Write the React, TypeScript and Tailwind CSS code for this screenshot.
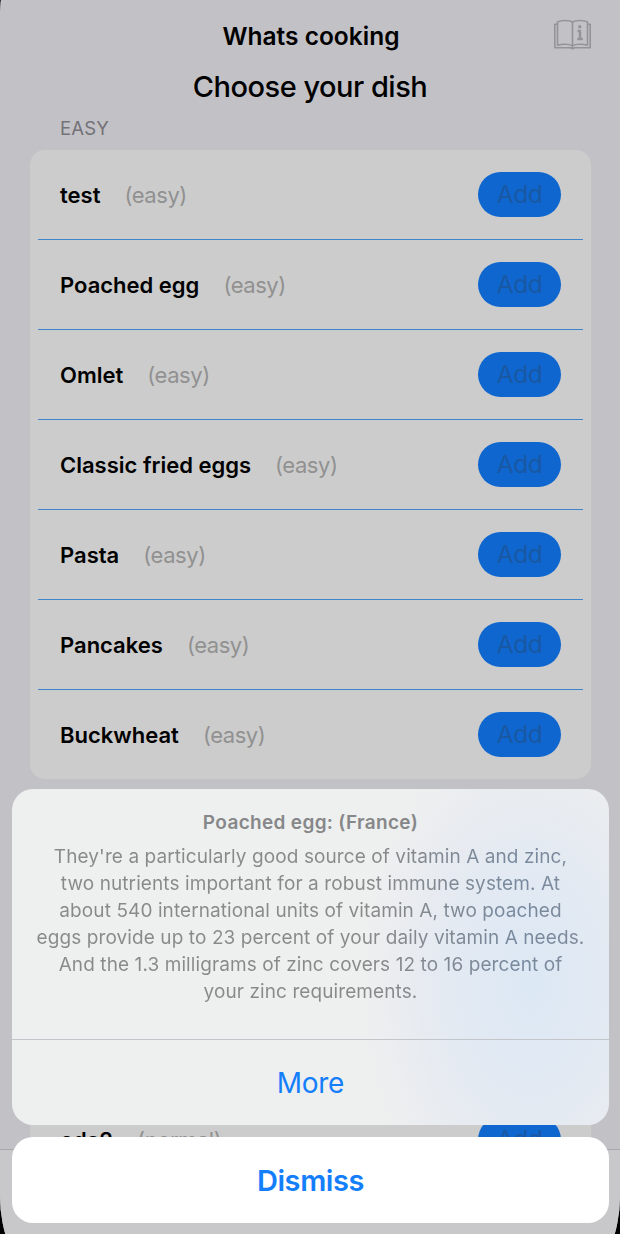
type Dish = { name: string; level: string };

const dishes: Dish[] = [
  { name: "test", level: "(easy)" },
  { name: "Poached egg", level: "(easy)" },
  { name: "Omlet", level: "(easy)" },
  { name: "Classic fried eggs", level: "(easy)" },
  { name: "Pasta", level: "(easy)" },
  { name: "Pancakes", level: "(easy)" },
  { name: "Buckwheat", level: "(easy)" },
];

function DishRow({ dish }: { dish: Dish }) {
  return (
    <div className="flex h-[89px] items-center justify-between px-[22px]">
      <div className="flex items-center gap-6 pt-px whitespace-nowrap">
        <span className="text-[22px] font-semibold text-black">{dish.name}</span>
        <span className="text-[22px] tracking-[-0.45px] text-[#919191]">{dish.level}</span>
      </div>
      <button className="h-[45px] w-[83px] rounded-full bg-[#0f66cf] text-[24.5px] tracking-[-0.5px] text-[#1958a3]">
        Add
      </button>
    </div>
  );
}

function GuideIcon() {
  return (
    <svg className="h-[32px] w-[39px]" viewBox="0 0 39 32" fill="none" stroke="#949496" strokeWidth="1.6" strokeLinejoin="round">
      <path d="M4.5 3C8 1 16 1 19.5 3C23 1 31 1 34.5 3V26.2C30 24.8 23 24.8 19.5 26.6C16 24.8 9 24.8 4.5 26.2Z" />
      <path d="M19.5 3V29.5M4.5 5.2H1.8V28.8H17.5L19.5 29.8L21.5 28.8H37.2V5.2H34.5" />
      <path d="M24.5 12H27V19.8M24.3 20H29.8" strokeWidth="2.4" />
      <circle cx="26.8" cy="7.8" r="1.7" fill="#949496" stroke="none" />
    </svg>
  );
}

export default function App() {
  return (
    <div className="relative h-[1234px] w-[620px] overflow-hidden bg-black font-['Inter',sans-serif]">
      <main className="flex h-[1336px] flex-col overflow-hidden rounded-[1px_0_140px_140px/14px_0_140px_140px] bg-[#c2c1c6]">
        <header className="grid h-[66px] shrink-0 grid-cols-[1fr_auto_1fr] items-start pt-[19px]">
          <h1 className="col-start-2 pl-[2px] text-[24.5px] leading-[35px] font-semibold whitespace-nowrap">Whats cooking</h1>
          <div className="mr-[28px] justify-self-end"><GuideIcon /></div>
        </header>
        <h2 className="shrink-0 text-center text-[29px] leading-[42px] font-medium tracking-[-0.5px]">Choose your dish</h2>
        <h3 className="h-[42px] shrink-0 pt-[8px] pl-[60px] text-[18.5px] leading-[24px] tracking-[0.15px] text-[#737278]">EASY</h3>
        <ul className="mr-[29px] ml-[30px] flex shrink-0 flex-col divide-y divide-[#4085c9] rounded-[15px] bg-[#cccccc] px-2">
          {dishes.map((dish) => (
            <li key={dish.name}>
              <DishRow dish={dish} />
            </li>
          ))}
        </ul>
        <ul className="mt-[48px] mr-[29px] ml-[30px] h-[322px] shrink-0 overflow-hidden rounded-t-[15px] bg-[#cccccc] px-2 pt-[268px]">
          <li>
            <DishRow dish={{ name: "eda2", level: "(normal)" }} />
          </li>
        </ul>
        <nav className="grow border-t border-[#a8a8ab] bg-[#c8c8ca]" />
      </main>

      <div className="absolute right-[11px] bottom-[11px] left-[12px] flex flex-col gap-[12px] text-center">
        <section className="h-[336px] rounded-[21px] bg-[#eeefef] bg-[radial-gradient(ellipse_170px_260px_at_520px_195px,#dce8f4_0%,#e1e9f3_35%,#e7ebf1_65%,#eeefef_100%)]">
          <div className="h-[251px] border-b border-[#c2c5ca] pt-[21px]">
            <h4 className="text-[19px] leading-[26px] font-semibold tracking-[0.33px] text-[#868789]">Poached egg: (France)</h4>
            <p className="mt-[7px] bg-[linear-gradient(90deg,#888989_60%,#77899e_85%,#828a99)] bg-clip-text text-[19px] leading-[27px] tracking-[0.09px] whitespace-nowrap text-transparent">
              They're a particularly good source of vitamin A and zinc,<br />
              two nutrients important for a robust immune system. At<br />
              about 540 international units of vitamin A, two poached<br />
              eggs provide up to 23 percent of your daily vitamin A needs.<br />
              And the 1.3 milligrams of zinc covers 12 to 16 percent of<br />
              your zinc requirements.
            </p>
          </div>
          <button className="h-[85px] w-full pt-px text-[28px] tracking-[-0.3px] text-[#147efb]">More</button>
        </section>
        <button className="h-[86px] rounded-[21px] bg-white pt-px text-[29px] font-semibold tracking-[-0.4px] text-[#147efb]">Dismiss</button>
      </div>
    </div>
  );
}
